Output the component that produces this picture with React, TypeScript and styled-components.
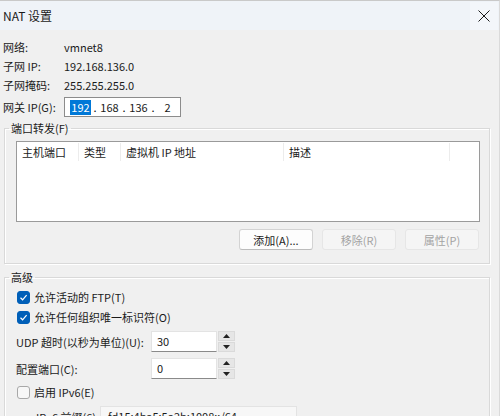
import React from 'react';
import styled, { createGlobalStyle } from 'styled-components';

const GlobalStyle = createGlobalStyle`
  html, body {
    margin: 0;
    padding: 0;
    background: #f0f0f0;
  }
  * {
    box-sizing: border-box;
  }
`;

const Window = styled.div`
  width: 500px;
  height: 416px;
  overflow: hidden;
  background: #f0f0f0;
  font-family: 'Noto Sans CJK SC', 'Noto Sans', sans-serif;
  font-size: 11px;
  color: #000;
  white-space: nowrap;
  border-top: 1px solid #c9c9c9;
  border-right: 1px solid #dadada;
`;

const TitleBar = styled.div`
  height: 29px;
  display: flex;
  align-items: center;
  justify-content: space-between;
  padding-left: 3px;
  background: #eff3f8;
`;

const Title = styled.span`
  font-size: 12px;
  color: #1a1a1a;
`;

const CloseButton = styled.div`
  width: 28px;
  height: 28px;
  display: flex;
  align-items: center;
  justify-content: center;
  margin-right: 1px;
  background: #f3f6fa;
`;

const Body = styled.div`
  padding: 7px 9px 0 3px;
`;

const InfoRow = styled.div<{ $tall?: boolean }>`
  display: flex;
  align-items: center;
  height: ${(p) => (p.$tall ? '20px' : '19px')};
  margin-top: ${(p) => (p.$tall ? '3px' : '0')};
`;

const InfoLabel = styled.span`
  width: 61px;
  flex-shrink: 0;
  color: #1a1a1a;
`;

const InfoValue = styled.span`
  color: #1a1a1a;
`;

const IpBox = styled.div`
  width: 117px;
  height: 20px;
  display: flex;
  align-items: center;
  padding-left: 5px;
  background: #fff;
  border: 1px solid #8c8c8c;
`;

const Octet = styled.span<{ $selected?: boolean }>`
  width: 21px;
  text-align: center;
  line-height: 15px;
  color: ${(p) => (p.$selected ? '#fff' : '#1a1a1a')};
  background: ${(p) => (p.$selected ? '#0078d7' : 'transparent')};
`;

const Dot = styled.span`
  width: 8px;
  text-align: center;
`;

const Group = styled.fieldset<{ $gap: number }>`
  margin: ${(p) => p.$gap}px 0 0 1px;
  padding: 0;
  border: 1px solid #d9d9d9;
  box-shadow: inset 1px 1px 0 #fff, 1px 1px 0 #fff;
  min-width: 0;
`;

const Legend = styled.legend`
  margin-left: 4px;
  padding: 0 2px;
  line-height: 16px;
  color: #1a1a1a;
`;

const ListBox = styled.div`
  margin: 5px 9px 0 11px;
  height: 81px;
  background: #fff;
  border: 1px solid #9a9a9a;
`;

const HeaderRow = styled.div`
  display: flex;
  height: 21px;
`;

const HeaderCell = styled.div<{ $width: number }>`
  width: ${(p) => p.$width}px;
  flex-shrink: 0;
  padding-left: 5px;
  line-height: 19px;
  color: #1a1a1a;
  border-right: 1px solid #ececec;
  height: 18px;
  margin-top: 1px;
`;

const ButtonRow = styled.div`
  display: flex;
  justify-content: flex-end;
  gap: 9px;
  padding: 7px 10px 13px 0;
`;

const Button = styled.button`
  width: 74px;
  height: 21px;
  padding: 0;
  font-family: inherit;
  font-size: 11px;
  color: #1a1a1a;
  background: #fdfdfd;
  border: 1px solid #d3d3d3;
  border-bottom-color: #bcbcbc;
  border-radius: 3px;

  &:disabled {
    color: #a3a3a3;
    background: #f5f5f5;
    border-color: #e6e6e6;
  }
`;

const CheckRow = styled.label`
  display: flex;
  align-items: center;
  height: 20px;
  padding-left: 12px;
  gap: 4px;
  color: #1a1a1a;
`;

const CheckBox = styled.span<{ $checked?: boolean }>`
  width: 13px;
  height: 13px;
  border-radius: 3px;
  display: flex;
  align-items: center;
  justify-content: center;
  background: ${(p) => (p.$checked ? '#005fb8' : '#f7f7f7')};
  border: 1px solid ${(p) => (p.$checked ? '#005fb8' : '#a8a8a8')};
`;

const FieldRow = styled.div<{ $gap: number }>`
  display: flex;
  align-items: center;
  height: 21px;
  margin-top: ${(p) => p.$gap}px;
  padding-left: 11px;
`;

const FieldLabel = styled.span`
  width: 135px;
  flex-shrink: 0;
  color: #1a1a1a;
`;

const NumberInput = styled.div`
  width: 66px;
  height: 21px;
  padding-left: 5px;
  line-height: 19px;
  background: #fff;
  border: 1px solid #e3e3e3;
  border-bottom-color: #8a8a8a;
  color: #1a1a1a;
`;

const Spinner = styled.div`
  width: 17px;
  height: 21px;
  margin-left: 1px;
  display: flex;
  flex-direction: column;
  gap: 1px;
`;

const SpinHalf = styled.div`
  flex: 1;
  display: flex;
  align-items: center;
  justify-content: center;
  background: #e6e6e6;
  border: 1px solid #dadada;
`;

const PrefixRow = styled.div`
  display: flex;
  align-items: center;
  height: 21px;
  margin-top: 4px;
  padding-left: 31px;
`;

const PrefixLabel = styled.span`
  width: 64px;
  flex-shrink: 0;
  color: #1a1a1a;
`;

const PrefixInput = styled.div`
  width: 197px;
  height: 21px;
  padding-left: 7px;
  line-height: 19px;
  background: #f7f7f7;
  border: 1px solid #e3e3e3;
  color: #1a1a1a;
`;

const Check = () => (
  <svg width="9" height="9" viewBox="0 0 9 9">
    <path d="M1.5 4.8 L3.6 6.8 L7.6 2.2" fill="none" stroke="#fff" strokeWidth="1.2" />
  </svg>
);

const Arrow = ({ up }: { up?: boolean }) => (
  <svg width="7" height="4" viewBox="0 0 7 4">
    <path d={up ? 'M0 4 L3.5 0 L7 4 Z' : 'M0 0 L3.5 4 L7 0 Z'} fill="#222" />
  </svg>
);

const Spin = () => (
  <Spinner>
    <SpinHalf>
      <Arrow up />
    </SpinHalf>
    <SpinHalf>
      <Arrow />
    </SpinHalf>
  </Spinner>
);

const columns = [
  { title: '主机端口', width: 62 },
  { title: '类型', width: 42 },
  { title: '虚拟机 IP 地址', width: 163 },
  { title: '描述', width: 166 },
];

const App = () => {
  return (
    <Window>
      <GlobalStyle />
      <TitleBar>
        <Title>NAT 设置</Title>
        <CloseButton>
          <svg width="12" height="12" viewBox="0 0 12 12">
            <path d="M0.5 0.5 L11.5 11.5 M11.5 0.5 L0.5 11.5" stroke="#1a1a1a" strokeWidth="1" />
          </svg>
        </CloseButton>
      </TitleBar>
      <Body>
        <InfoRow>
          <InfoLabel>网络:</InfoLabel>
          <InfoValue>vmnet8</InfoValue>
        </InfoRow>
        <InfoRow>
          <InfoLabel>子网 IP:</InfoLabel>
          <InfoValue>192.168.136.0</InfoValue>
        </InfoRow>
        <InfoRow>
          <InfoLabel>子网掩码:</InfoLabel>
          <InfoValue>255.255.255.0</InfoValue>
        </InfoRow>
        <InfoRow $tall>
          <InfoLabel>网关 IP(G):</InfoLabel>
          <IpBox>
            <Octet $selected>192</Octet>
            <Dot>.</Dot>
            <Octet>168</Octet>
            <Dot>.</Dot>
            <Octet>136</Octet>
            <Dot>.</Dot>
            <Octet>2</Octet>
          </IpBox>
        </InfoRow>

        <Group $gap={3}>
          <Legend>端口转发(F)</Legend>
          <ListBox>
            <HeaderRow>
              {columns.map((c) => (
                <HeaderCell key={c.title} $width={c.width}>
                  {c.title}
                </HeaderCell>
              ))}
            </HeaderRow>
          </ListBox>
          <ButtonRow>
            <Button>添加(A)...</Button>
            <Button disabled>移除(R)</Button>
            <Button disabled>属性(P)</Button>
          </ButtonRow>
        </Group>

        <Group $gap={5}>
          <Legend>高级</Legend>
          <CheckRow style={{ marginTop: 2 }}>
            <CheckBox $checked>
              <Check />
            </CheckBox>
            允许活动的 FTP(T)
          </CheckRow>
          <CheckRow>
            <CheckBox $checked>
              <Check />
            </CheckBox>
            允许任何组织唯一标识符(O)
          </CheckRow>
          <FieldRow $gap={4}>
            <FieldLabel>UDP 超时(以秒为单位)(U):</FieldLabel>
            <NumberInput>30</NumberInput>
            <Spin />
          </FieldRow>
          <FieldRow $gap={6}>
            <FieldLabel>配置端口(C):</FieldLabel>
            <NumberInput>0</NumberInput>
            <Spin />
          </FieldRow>
          <CheckRow style={{ marginTop: 3 }}>
            <CheckBox />
            启用 IPv6(E)
          </CheckRow>
          <PrefixRow>
            <PrefixLabel>IPv6 前缀(6):</PrefixLabel>
            <PrefixInput>fd15:4ba5:5a2b:1008::/64</PrefixInput>
          </PrefixRow>
        </Group>
      </Body>
    </Window>
  );
};

export default App;
